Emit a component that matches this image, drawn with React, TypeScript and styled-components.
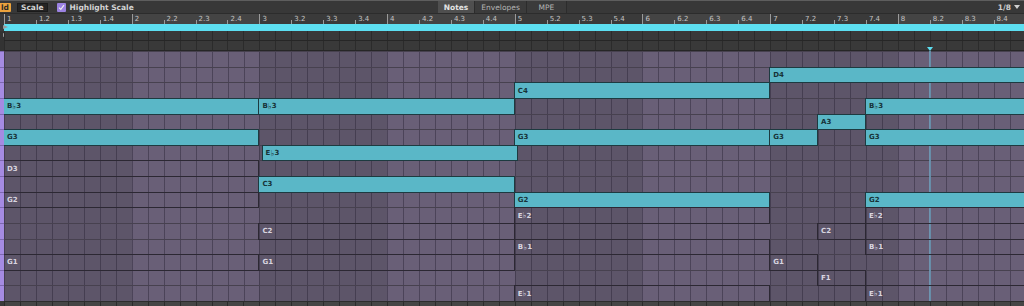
import React from 'react';
import styled, { createGlobalStyle, css } from 'styled-components';

const BAR = 127.7;
const BEAT = BAR / 4;
const ROW = 15.625;
const BARS = 8;

const GlobalStyle = createGlobalStyle`
    html, body {
        margin: 0;
        padding: 0;
        background: #3a3a3a;
    }
    * {
        box-sizing: border-box;
    }
`;

const Frame = styled.div`
    width: 1024px;
    height: 306px;
    overflow: hidden;
    display: flex;
    flex-direction: column;
    background: #3a3a3a;
    font-family: 'DejaVu Sans', 'Liberation Sans', sans-serif;
    font-weight: bold;
    border-top: 1px solid #5e5e5e;
`;

const Toolbar = styled.div`
    height: 13px;
    display: flex;
    align-items: center;
    gap: 4px;
    background: #383838;
    font-size: 7.5px;
    color: #d4d4d4;
    border-bottom: 1px solid #2c2c2c;
`;

const FoldButton = styled.div`
    margin-left: -10px;
    width: 21px;
    height: 9px;
    background: #eda33c;
    color: #2a2a2a;
    display: flex;
    align-items: center;
    justify-content: flex-end;
    padding-right: 2px;
    border-radius: 1px;
`;

const ScaleButton = styled.div`
    height: 9px;
    padding: 0 3px;
    margin-left: 2px;
    background: #242424;
    border: 1px solid #1b1b1b;
    display: flex;
    align-items: center;
`;

const Check = styled.div`
    width: 9px;
    height: 9px;
    margin-left: 5px;
    background: #9b82e2;
    border-radius: 1px;
    display: flex;
    align-items: center;
    justify-content: center;
`;

const Tabs = styled.div`
    display: flex;
    margin-left: 300px;
    height: 12px;
`;

const Tab = styled.div<{ $active?: boolean; $w?: number }>`
    padding: 0 6px;
    display: flex;
    align-items: center;
    justify-content: center;
    ${({ $w }) => ($w ? `width: ${$w}px;` : '')}
    border-right: 1px solid #2c2c2c;
    background: ${({ $active }) => ($active ? '#4f4f4f' : '#3b3b3b')};
    color: ${({ $active }) => ($active ? '#e4e4e4' : '#b4b4b4')};
    font-weight: ${({ $active }) => ($active ? 'bold' : 'normal')};
`;

const Grid8 = styled.div`
    margin-left: auto;
    margin-right: 4px;
    display: flex;
    align-items: center;
    gap: 3px;
    color: #d0d0d0;
`;

const Strip = styled.div<{ $h: number; $bg?: string }>`
    height: ${({ $h }) => $h}px;
    display: flex;
    flex-shrink: 0;
    background: ${({ $bg }) => $bg || 'transparent'};
`;

const Edge = styled.div<{ $bg: string }>`
    width: 4px;
    flex-shrink: 0;
    background: ${({ $bg }) => $bg};
    position: relative;
`;

const Bars = styled.div`
    flex: 1;
    display: flex;
    overflow: hidden;
`;

const RulerBar = styled.div<{ $odd: boolean }>`
    width: ${BAR}px;
    flex-shrink: 0;
    display: flex;
    background: ${({ $odd }) => ($odd ? '#3a3a3a' : '#444444')};
`;

const RulerBeat = styled.div<{ $major: boolean }>`
    width: ${BEAT}px;
    flex-shrink: 0;
    position: relative;
    font-size: 7px;
    font-weight: normal;
    color: #c4c4c4;
    padding: 1px 0 0 3px;
    &::before {
        content: '';
        position: absolute;
        left: 0;
        bottom: 0;
        width: 1px;
        height: ${({ $major }) => ($major ? '10px' : '4px')};
        background: #9a9a9a;
    }
`;

const Loop = styled.div`
    flex: 1;
    background: #5ddff1;
`;

const Marker = styled.div<{ $top: number }>`
    position: absolute;
    left: 3px;
    top: ${({ $top }) => $top}px;
    width: 0;
    height: 0;
    border-top: 2.5px solid transparent;
    border-bottom: 2.5px solid transparent;
    border-left: 5px solid #9a9a9a;
`;

const laneLines = css`
    background-image: repeating-linear-gradient(
        90deg,
        #2b2b2b 0,
        #2b2b2b 1px,
        transparent 1px,
        transparent ${BEAT / 2}px
    );
`;

const Lane = styled.div`
    flex: 1;
    background-color: #393939;
    ${laneLines};
    border-bottom: 1px solid #262626;
`;

const LaneStack = styled.div`
    flex: 1;
    display: flex;
    flex-direction: column;
    position: relative;
`;

const Roll = styled.div`
    height: 250px;
    display: flex;
    flex-shrink: 0;
`;

const Keys = styled.div`
    width: 4px;
    flex-shrink: 0;
    display: grid;
    grid-template-rows: repeat(16, 1fr);
    background: #a58be2;
`;

const KeyRow = styled.div`
    border-top: 1px solid #7d68b0;
`;

const Canvas = styled.div`
    flex: 1;
    position: relative;
    overflow: hidden;
`;

const BarCols = styled.div`
    display: flex;
    height: 100%;
`;

const BarCol = styled.div<{ $odd: boolean }>`
    width: ${BAR}px;
    flex-shrink: 0;
    height: 100%;
    background-color: ${({ $odd }) => ($odd ? '#5d5569' : '#695f77')};
    background-image: repeating-linear-gradient(
        90deg,
        rgba(40, 34, 52, 0.45) 0,
        rgba(40, 34, 52, 0.45) 1px,
        transparent 1px,
        transparent ${BEAT / 2}px
    );
`;

const RowLines = styled.div`
    position: absolute;
    inset: 0;
    display: grid;
    grid-template-rows: repeat(16, 1fr);
`;

const RowLine = styled.div`
    border-top: 1px solid #47414f;
`;

const Note = styled.div<{ $on: boolean }>`
    position: absolute;
    height: ${ROW + 1}px;
    display: flex;
    align-items: center;
    padding-left: 3px;
    font-size: 7px;
    white-space: nowrap;
    overflow: hidden;
    border: 1px solid ${({ $on }) => ($on ? '#1d3a40' : '#2c2833')};
    background: ${({ $on }) => ($on ? '#5ab7c7' : 'transparent')};
    color: ${({ $on }) => ($on ? '#173237' : '#d9d5e0')};
`;

const Flat = styled.span`
    font-family: 'DejaVu Sans', sans-serif;
    font-weight: normal;
    font-size: 8.5px;
    line-height: 1;
`;

const Playhead = styled.div`
    position: absolute;
    left: 925px;
    top: 0;
    bottom: 0;
    width: 2px;
    background: rgba(112, 165, 195, 0.75);
`;

const PlayTip = styled.div`
    position: absolute;
    left: 923px;
    bottom: 0;
    width: 0;
    height: 0;
    border-left: 3px solid transparent;
    border-right: 3px solid transparent;
    border-top: 4px solid #5ddff1;
`;

const Footer = styled.div`
    flex: 1;
    background-color: #454545;
    border-top: 1px solid #2d2d2d;
    margin-left: 4px;
    ${laneLines};
`;

type N = { row: number; start: number; len: number; on: boolean };

const names = ['', 'D4', 'C4', 'B♭3', 'A3', 'G3', 'E♭3', 'D3', 'C3', 'G2', 'E♭2', 'C2', 'B♭1', 'G1', 'F1', 'E♭1'];

const notes: N[] = [
    { row: 1, start: 24, len: 12, on: true },
    { row: 2, start: 16, len: 8, on: true },
    { row: 3, start: 0, len: 8, on: true },
    { row: 3, start: 8, len: 8, on: true },
    { row: 3, start: 27, len: 10, on: true },
    { row: 4, start: 25.5, len: 1.5, on: true },
    { row: 5, start: 0, len: 8, on: true },
    { row: 5, start: 16, len: 8, on: true },
    { row: 5, start: 24, len: 1.5, on: true },
    { row: 5, start: 27, len: 10, on: true },
    { row: 6, start: 8.1, len: 8, on: true },
    { row: 7, start: 0, len: 8, on: false },
    { row: 8, start: 8, len: 8, on: true },
    { row: 9, start: 0, len: 8, on: false },
    { row: 9, start: 16, len: 8, on: true },
    { row: 9, start: 27, len: 10, on: true },
    { row: 10, start: 16, len: 8, on: false },
    { row: 10, start: 27, len: 10, on: false },
    { row: 11, start: 8, len: 8, on: false },
    { row: 11, start: 25.5, len: 1.5, on: false },
    { row: 12, start: 16, len: 8, on: false },
    { row: 12, start: 27, len: 10, on: false },
    { row: 13, start: 0, len: 8, on: false },
    { row: 13, start: 8, len: 8, on: false },
    { row: 13, start: 24, len: 1.5, on: false },
    { row: 14, start: 25.5, len: 1.5, on: false },
    { row: 15, start: 16, len: 8, on: false },
    { row: 15, start: 27, len: 10, on: false },
];

const bars = Array.from({ length: BARS }, (_, i) => i);
const rows = Array.from({ length: 16 }, (_, i) => i);

const NoteName = ({ name }: { name: string }) => {
    const [letter, octave] = name.split('♭');
    if (octave === undefined) return <>{name}</>;
    return (
        <>
            {letter}
            <Flat>♭</Flat>
            {octave}
        </>
    );
};

export default function App() {
    return (
        <>
            <GlobalStyle />
            <Frame>
                <Toolbar>
                    <FoldButton>ld</FoldButton>
                    <ScaleButton>Scale</ScaleButton>
                    <Check>
                        <svg width="7" height="7" viewBox="0 0 7 7">
                            <path d="M1 3.6 L2.8 5.4 L6 1.2" fill="none" stroke="#eee" strokeWidth="1.1" />
                        </svg>
                    </Check>
                    <span>Highlight Scale</span>
                    <Tabs>
                        <Tab $active>Notes</Tab>
                        <Tab>Envelopes</Tab>
                        <Tab $w={40}>MPE</Tab>
                    </Tabs>
                    <Grid8>
                        1/8
                        <svg width="6" height="4" viewBox="0 0 6 4">
                            <path d="M0 0 H6 L3 4 Z" fill="#d0d0d0" />
                        </svg>
                    </Grid8>
                </Toolbar>

                <Strip $h={10} $bg="#3a3a3a">
                    <Edge $bg="#3a3a3a" />
                    <Bars>
                        {bars.map((b) => (
                            <RulerBar key={b} $odd={b % 2 === 0}>
                                {[0, 1, 2, 3].map((q) => (
                                    <RulerBeat key={q} $major={q === 0}>
                                        {q === 0 ? b + 1 : `${b + 1}.${q + 1}`}
                                    </RulerBeat>
                                ))}
                            </RulerBar>
                        ))}
                    </Bars>
                </Strip>

                <Strip $h={7} $bg="#5ddff1">
                    <Edge $bg="#3a3a3a">
                        <Marker $top={1} />
                    </Edge>
                    <Loop />
                </Strip>

                <Strip $h={20}>
                    <Edge $bg="#333333">
                        <Marker $top={2} />
                    </Edge>
                    <LaneStack>
                        <Lane />
                        <Lane />
                        <PlayTip />
                    </LaneStack>
                </Strip>

                <Roll>
                    <Keys>
                        {rows.map((r) => (
                            <KeyRow key={r} />
                        ))}
                    </Keys>
                    <Canvas>
                        <BarCols>
                            {bars.map((b) => (
                                <BarCol key={b} $odd={b % 2 === 0} />
                            ))}
                        </BarCols>
                        <RowLines>
                            {rows.map((r) => (
                                <RowLine key={r} />
                            ))}
                        </RowLines>
                        <Playhead />
                        {notes.map((n, i) => (
                            <Note
                                key={i}
                                $on={n.on}
                                style={{
                                    left: n.start * BEAT - 1,
                                    top: n.row * ROW,
                                    width: n.len * BEAT + 1,
                                }}
                            >
                                <NoteName name={names[n.row]} />
                            </Note>
                        ))}
                    </Canvas>
                </Roll>

                <Footer />
            </Frame>
        </>
    );
}
